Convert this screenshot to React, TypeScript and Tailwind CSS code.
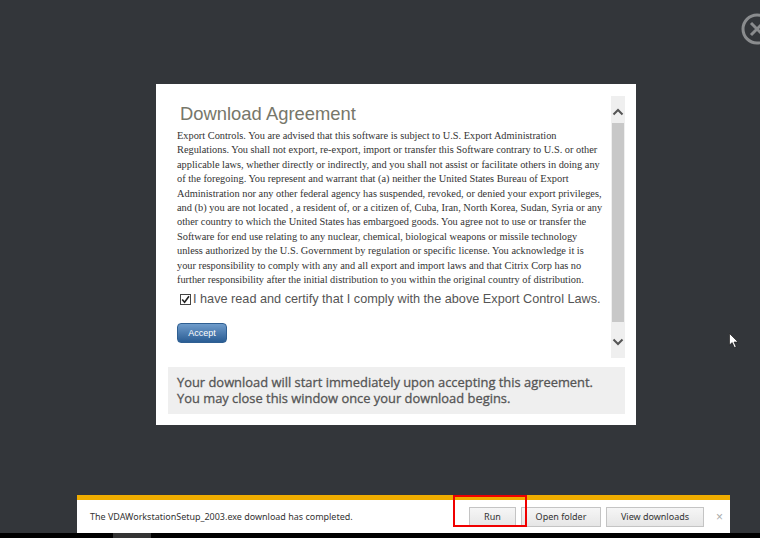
const lines = [
  'Export Controls. You are advised that this software is subject to U.S. Export Administration',
  'Regulations. You shall not export, re-export, import or transfer this Software contrary to U.S. or other',
  'applicable laws, whether directly or indirectly, and you shall not assist or facilitate others in doing any',
  'of the foregoing. You represent and warrant that (a) neither the United States Bureau of Export',
  'Administration nor any other federal agency has suspended, revoked, or denied your export privileges,',
  'and (b) you are not located , a resident of, or a citizen of, Cuba, Iran, North Korea, Sudan, Syria or any',
  'other country to which the United States has embargoed goods. You agree not to use or transfer the',
  'Software for end use relating to any nuclear, chemical, biological weapons or missile technology',
  'unless authorized by the U.S. Government by regulation or specific license. You acknowledge it is',
  'your responsibility to comply with any and all export and import laws and that Citrix Corp has no',
  'further responsibility after the initial distribution to you within the original country of distribution.',
];

function BarButton({ label, width }: { label: string; width: string }) {
  return (
    <button className={`${width} h-5 border border-[#c4c4c4] bg-gradient-to-b from-[#f6f6f6] to-[#e6e6e6] text-[9px] text-[#333] font-['Noto_Sans',sans-serif]`}>
      {label}
    </button>
  );
}

function App() {
  return (
    <div className="relative w-[760px] h-[538px] overflow-hidden bg-[#33363a] flex flex-col">
      {/* close button, cut off by the window edge */}
      <svg className="absolute left-[741px] top-[13px]" width="32" height="32" viewBox="0 0 32 32" fill="none" stroke="#8a8c8e" strokeWidth="3">
        <circle cx="16" cy="16" r="14" />
        <path d="M10 10 L22 22 M22 10 L10 22" />
      </svg>

      {/* mouse cursor */}
      <svg className="absolute left-[729px] top-[333px]" width="11" height="16" viewBox="0 0 11 16">
        <path d="M0.5 0.5 L0.5 12 L3.2 9.6 L5.4 14.6 L7.2 13.8 L5 9 L9 9 Z" fill="#fff" stroke="#111" strokeWidth="0.6" />
      </svg>

      <div className="mt-[84px] ml-[156px] w-[480px] h-[341px] bg-white pt-3 pr-[11px] pl-3 shrink-0">
        <div className="flex h-[262px]">
          <div className="flex-1 pl-[9px]">
            <h1 className="ml-[3px] mt-[6px] text-[18.4px] leading-[24px] text-[#77776a] font-['Liberation_Sans',sans-serif]">
              Download Agreement
            </h1>
            <div className="mt-[3px] text-[10.35px] leading-[14.4px] text-[#333] font-['Liberation_Serif',serif] whitespace-nowrap">
              {lines.map((l) => (
                <div key={l}>{l}</div>
              ))}
            </div>
            <label className="mt-[3px] flex items-center text-[12.7px] leading-[18px] text-[#555] font-['Liberation_Sans',sans-serif] whitespace-nowrap">
              <span className="ml-[3px] mr-[2px] w-[11px] h-[11px] border border-[#444] bg-white flex items-center justify-center">
                <svg width="9" height="9" viewBox="0 0 9 9" fill="none" stroke="#222" strokeWidth="1.6">
                  <path d="M1.2 4.5 L3.6 7.2 L8 1.2" />
                </svg>
              </span>
              I have read and certify that I comply with the above Export Control Laws.
            </label>
            <button className="mt-[15px] block w-[50px] h-5 rounded-sm border border-[#2f5f92] bg-gradient-to-b from-[#6f9ccb] to-[#2a5d94] text-[9px] text-white font-['Liberation_Sans',sans-serif]">
              Accept
            </button>
          </div>

          <div className="w-[14px] bg-[#efefef] flex flex-col items-center">
            <svg className="mt-[12px]" width="12" height="8" viewBox="0 0 12 8" fill="none" stroke="#555" strokeWidth="2">
              <path d="M1.5 6.5 L6 2 L10.5 6.5" />
            </svg>
            <div className="mt-[7px] w-3 h-[199px] bg-[#c8c8c8]" />
            <svg className="mt-[16px]" width="12" height="8" viewBox="0 0 12 8" fill="none" stroke="#555" strokeWidth="2">
              <path d="M1.5 1.5 L6 6 L10.5 1.5" />
            </svg>
          </div>
        </div>

        <div className="mt-[9px] h-[47px] bg-[#efefef] pl-[9px] pt-[7px] text-[12.9px] leading-[16px] text-[#555] [-webkit-text-stroke:0.3px_#555] font-['Open_Sans',sans-serif] whitespace-nowrap">
          <div>Your download will start immediately upon accepting this agreement.</div>
          <div>You may close this window once your download begins.</div>
        </div>
      </div>

      {/* browser download bar */}
      <div className="mt-[70px] ml-[77px] w-[653px] h-[38px] bg-white border-t-[5px] border-[#f0ad00] flex items-center shrink-0">
        <span className="ml-[13px] text-[8.97px] text-[#333] font-['Noto_Sans',sans-serif] whitespace-nowrap">
          The VDAWorkstationSetup_2003.exe download has completed.
        </span>
        <div className="ml-auto flex items-center gap-[5px]">
          <BarButton label="Run" width="w-[47px]" />
          <BarButton label="Open folder" width="w-[80px]" />
          <BarButton label="View downloads" width="w-[98px]" />
          <span className="ml-[7px] mr-[7px] text-[12px] leading-none text-[#aaa] font-['Liberation_Sans',sans-serif]">×</span>
        </div>
      </div>

      <div className="flex-1 bg-black pl-[113px]">
        <div className="w-[38px] h-full bg-[#333]" />
      </div>

      {/* red highlight drawn on top of the screenshot */}
      <div className="absolute left-[453px] top-[495px] w-[74px] h-[32px] border-2 border-[#f00000]" />
    </div>
  );
}

export default App;
